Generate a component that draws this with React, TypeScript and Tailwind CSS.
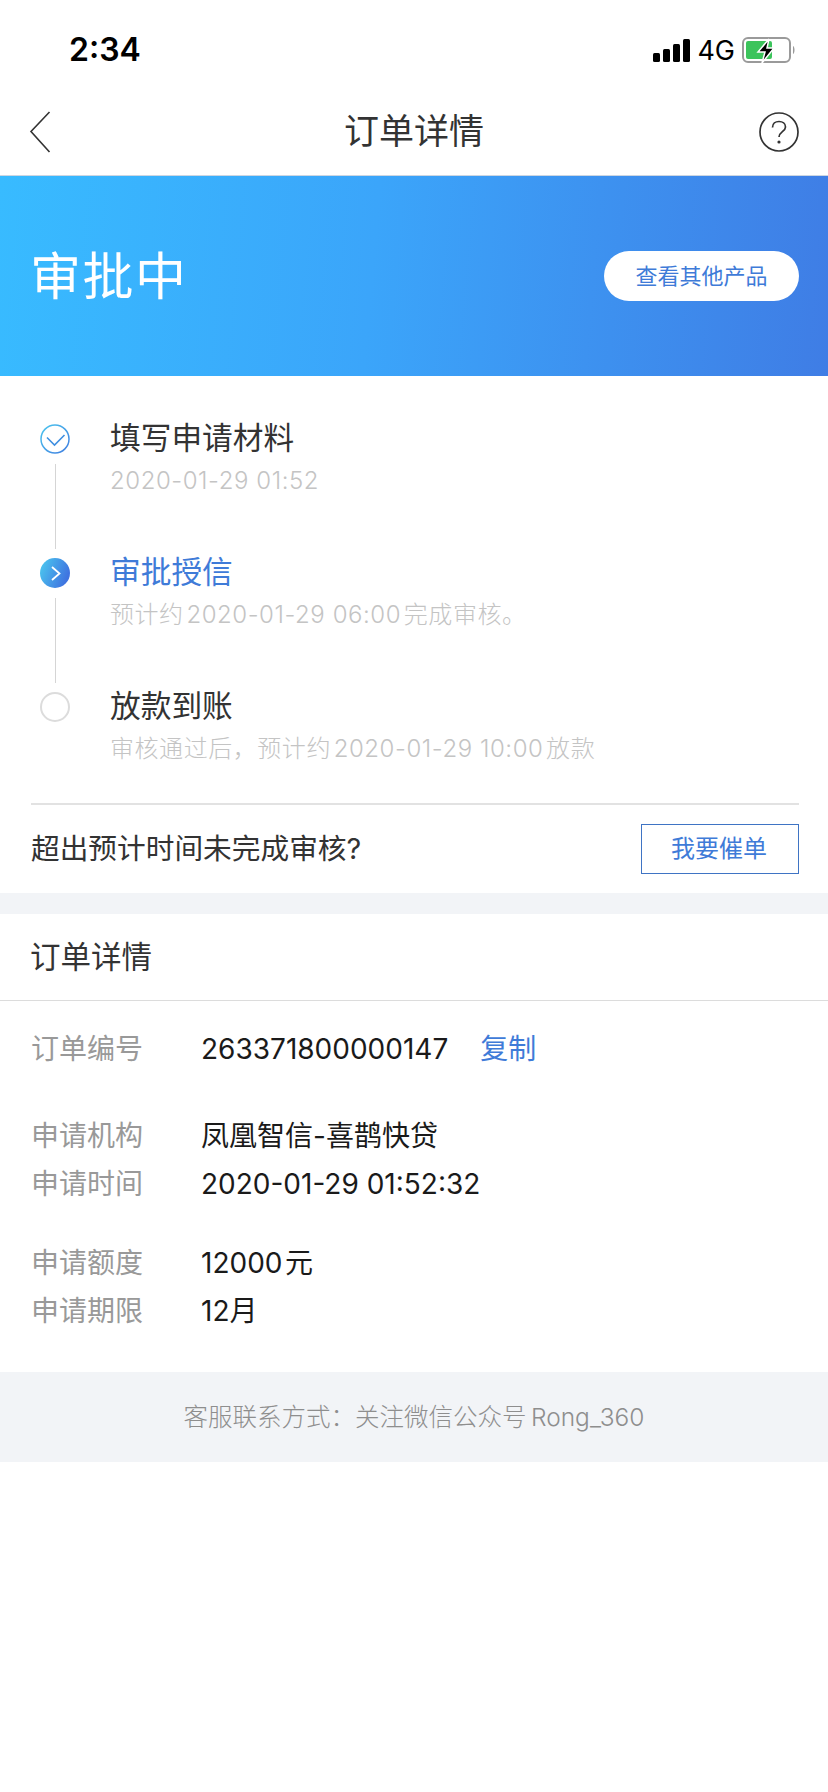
const sans = "font-['Inter','Noto_Sans_CJK_SC',sans-serif]";

function CheckIcon() {
  return (
    <svg width="30" height="30" viewBox="0 0 30 30" fill="none">
      <defs>
        <linearGradient id="chk" x1="0" y1="0" x2="1" y2="1">
          <stop offset="0" stopColor="#4cc6ee" />
          <stop offset="1" stopColor="#3f7de0" />
        </linearGradient>
      </defs>
      <circle cx="15" cy="15" r="14" stroke="url(#chk)" strokeWidth="1.5" />
      <path d="M7 13.5 L14.5 21 L24.5 11" stroke="#3f8fe0" strokeWidth="1.6" />
    </svg>
  );
}

function ActiveIcon() {
  return (
    <svg width="30" height="30" viewBox="0 0 30 30" fill="none">
      <defs>
        <linearGradient id="act" x1="0" y1="0" x2="1" y2="0.4">
          <stop offset="0" stopColor="#4ccdf0" />
          <stop offset="1" stopColor="#3f74e0" />
        </linearGradient>
      </defs>
      <circle cx="15" cy="15" r="15" fill="url(#act)" />
      <path d="M12 9 L19.5 15.5 L12 22" stroke="#fff" strokeWidth="1.8" />
    </svg>
  );
}

function EmptyIcon() {
  return <div className="box-border size-[30px] rounded-full border-2 border-[#dcdcdc]" />;
}

const steps = [
  { icon: <CheckIcon />, title: "填写申请材料", sub: "2020-01-29 01:52", blue: false },
  { icon: <ActiveIcon />, title: "审批授信", sub: "预计约\u200A2020-01-29 06:00\u200A完成审核。", blue: true },
  { icon: <EmptyIcon />, title: "放款到账", sub: "审核通过后，预计约\u200A2020-01-29 10:00\u200A放款", blue: false },
];

function StatusBar() {
  return (
    <div className="flex h-[88px] items-center justify-between pl-[69px] pr-[32px] pt-[12px]">
      <span className="text-[32px] font-semibold text-black">2:34</span>
      <div className="flex items-center gap-[7px]">
        <svg width="37" height="23" viewBox="0 0 37 23" fill="#000">
          <rect x="0" y="14" width="7" height="9" rx="1.5" />
          <rect x="10" y="10" width="7" height="13" rx="1.5" />
          <rect x="20" y="5" width="7" height="18" rx="1.5" />
          <rect x="30" y="0" width="7" height="23" rx="1.5" />
        </svg>
        <span className="text-[27px] leading-none text-black">4G</span>
        <svg width="54" height="26" viewBox="0 0 54 26" fill="none">
          <rect x="1" y="1" width="47" height="24" rx="5" stroke="#9a9a9a" strokeWidth="2" />
          <rect x="4" y="4" width="26" height="18" rx="2" fill="#3cc45c" />
          <path d="M51 9 C53 10 53 16 51 17 Z" fill="#9a9a9a" />
          <path d="M27 2 L16 15 H23 L20 26 L32 11 H25 L27 2 Z" fill="#000" stroke="#fff" strokeWidth="1.5" />
        </svg>
      </div>
    </div>
  );
}

function NavBar() {
  return (
    <div className="flex h-[88px] items-center justify-between border-b border-[#ccd6e2] pl-[29px] pr-[29px]">
      <div className="w-[40px]">
        <svg width="22" height="42" viewBox="0 0 22 42" fill="none">
          <path d="M20.5 1 L2 20.5 L20.5 41" stroke="#333" strokeWidth="1.6" />
        </svg>
      </div>
      <span className="text-[35px] font-normal text-[#333]">订单详情</span>
      <svg width="40" height="40" viewBox="0 0 40 40" fill="none">
        <circle cx="20" cy="20" r="19" stroke="#333" strokeWidth="1.7" />
        <path d="M13.5 15.5 C13.5 11.5 16.5 9.5 20 9.5 C23.5 9.5 26.5 11.5 26.5 15 C26.5 19.5 20 20 20 25" stroke="#333" strokeWidth="1.7" />
        <circle cx="20" cy="30" r="1.6" fill="#333" />
      </svg>
    </div>
  );
}

function Row({ label, value, blue }: { label: string; value: string; blue?: string }) {
  return (
    <div className="flex h-[48px] items-center text-[28px]">
      <span className="w-[170px] font-normal text-[#999]">{label}</span>
      <span className="font-normal text-[#1a1a1a]">{value}</span>
      {blue && <span className="ml-[32px] font-normal text-[#3f7bd8]">{blue}</span>}
    </div>
  );
}

export default function App() {
  return (
    <div className={`${sans} min-h-[1792px] w-[828px] bg-white`}>
      <StatusBar />
      <NavBar />

      <div className="flex h-[200px] items-center justify-between bg-[linear-gradient(95deg,#38bbff_0%,#3ba5fa_45%,#3f7de5_100%)] pl-[30px] pr-[29px]">
        <span className="pt-[3px] text-[51px] font-normal tracking-[1.5px] text-white">审批中</span>
        <span className="flex h-[50px] w-[195px] items-center justify-center rounded-full bg-white text-[22px] text-[#3f7bd8]">
          查看其他产品
        </span>
      </div>

      <div className="px-[30px] pt-[48px]">
        {steps.map((s, i) => (
          <div key={s.title} className="flex h-[134px]">
            <div className="ml-[10px] flex w-[30px] flex-col items-center">
              {s.icon}
              {i < 2 && <div className="mt-[10px] h-[85px] w-[1px] bg-[#d5d5d5]" />}
            </div>
            <div className="ml-[40px]">
              <div className={`-mt-[8px] text-[30.7px] font-normal leading-[44px] ${s.blue ? "text-[#3f7bd8]" : "text-[#333]"}`}>
                {s.title}
              </div>
              <div className="text-[24px] font-light leading-[41px] tracking-[0.55px] text-[#c4c4c4]">{s.sub}</div>
            </div>
          </div>
        ))}
      </div>

      <div className="-mt-[23px] ml-[31px] mr-[29px] flex h-[90px] items-center justify-between border-t-2 border-[#e2e2e2]">
        <span className="text-[28.7px] font-normal text-[#333]">超出预计时间未完成审核?</span>
        <span className="flex h-[50px] w-[158px] items-center justify-center border border-[#3f74c4] pr-[2px] text-[24px] font-normal text-[#3f7bd8]">
          我要催单
        </span>
      </div>

      <div className="h-[21px] bg-[#f2f4f7]" />

      <div className="flex h-[87px] items-center border-b border-[#dcdcdc] pl-[30px] text-[30.5px] font-normal text-[#333]">
        订单详情
      </div>

      <div className="pl-[31px] pt-[24px]">
        <Row label="订单编号" value="263371800000147" blue="复制" />
        <div className="mt-[39px]">
          <Row label="申请机构" value="凤凰智信-喜鹊快贷" />
          <Row label="申请时间" value="2020-01-29 01:52:32" />
        </div>
        <div className="mt-[31px]">
          <Row label="申请额度" value={"12000\u200A元"} />
          <Row label="申请期限" value="12月" />
        </div>
      </div>

      <div className="mt-[37px] flex h-[90px] items-center justify-center bg-[#f2f4f7] text-[24.5px] font-light text-[#8e8e8e]">
        客服联系方式：关注微信公众号&#8201;Rong_360
      </div>
    </div>
  );
}
